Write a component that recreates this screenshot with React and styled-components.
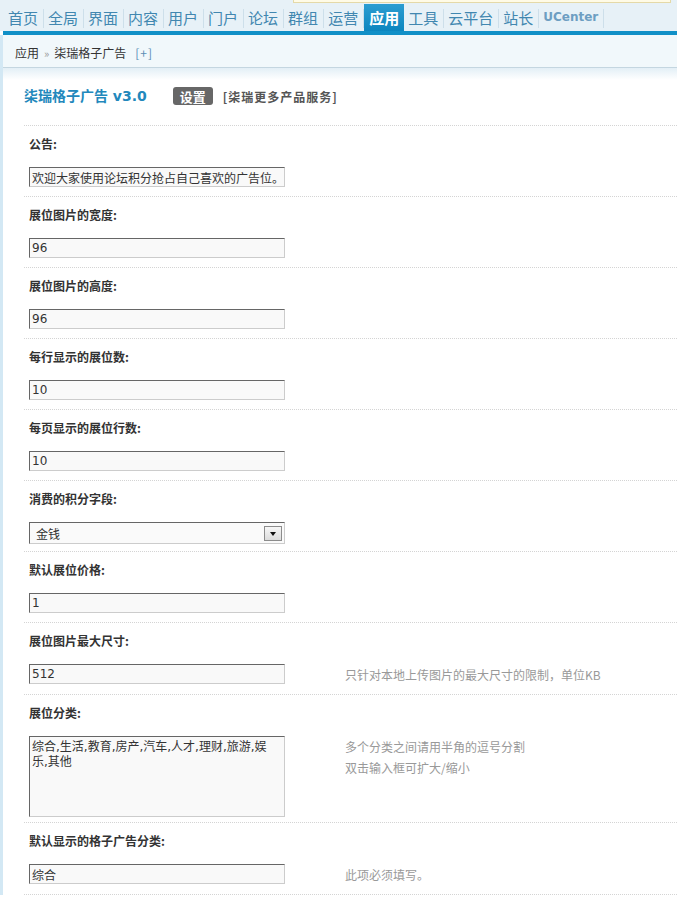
import React from 'react';
import styled, { createGlobalStyle } from 'styled-components';

const Global = createGlobalStyle`
  html, body { margin: 0; padding: 0; background: #fff; }
  body {
    font-family: "Noto Sans CJK SC", "Liberation Sans", sans-serif;
    font-size: 12px;
    color: #333;
  }
`;

const Page = styled.div`
  position: relative;
  width: 677px;
  min-height: 898px;
  overflow: hidden;
`;

const Notice = styled.div`
  position: absolute;
  top: 0;
  left: 293px;
  width: 376px;
  height: 2px;
  background: #fffbe6;
  border: 1px solid #e4d9a8;
  border-top: none;
`;

const Nav = styled.ul`
  display: flex;
  margin: 0;
  padding: 4px 0 0 4px;
  height: 27px;
  list-style: none;
  background: #e7f1f7;
`;

const NavItem = styled.li`
  display: flex;
  align-items: center;
  height: 27px;
  padding: ${p => (p.$active ? '0 5px' : '0 0 0 4px')};
  font-size: 15px;
  line-height: 27px;
  color: ${p => (p.$active ? '#fff' : '#4187b0')};
  font-weight: ${p => (p.$active ? 'bold' : 'normal')};
  background: ${p => (p.$active ? 'linear-gradient(#2c9dd1, #0c86bf)' : 'transparent')};
  white-space: nowrap;

  &::after {
    content: '';
    display: ${p => (p.$active ? 'none' : 'block')};
    width: 1px;
    height: 19px;
    margin-left: 5px;
    margin-top: 2px;
    background: #cddfea;
  }
`;

const NavLatin = styled.span`
  font-family: "DejaVu Sans", "Liberation Sans", sans-serif;
  font-size: 12px;
  font-weight: bold;
  color: #6d9ec2;
`;

const Bar = styled.div`
  height: 4px;
  margin-left: 3px;
  background: #1190c7;
`;

const Main = styled.div`
  border-left: 3px solid #d3e8f4;
`;

const Crumbs = styled.div`
  display: flex;
  align-items: center;
  gap: 5px;
  height: 29px;
  padding: 3px 0 0 12px;
  background: #f1f8fb;
  border-bottom: 1px solid #c4d6e0;
  color: #333;
`;

const CrumbSep = styled.span`
  color: #999;
  font-size: 11px;
`;

const CrumbAdd = styled.span`
  color: #5a8db4;
  margin-left: 4px;
  letter-spacing: 1px;
`;

const Content = styled.div`
  padding-left: 21px;
  background: linear-gradient(to bottom, #e3eff6 0, #ffffff 12px) no-repeat;
`;

const TitleRow = styled.div`
  display: flex;
  align-items: center;
  height: 18px;
  padding: 19px 0 20px 0;
`;

const Title = styled.h3`
  margin: 0;
  font-family: "DejaVu Sans", "Noto Sans CJK SC", sans-serif;
  font-size: 14px;
  font-weight: bold;
  line-height: 18px;
  color: #2288bc;
`;

const Badge = styled.span`
  display: inline-flex;
  align-items: center;
  height: 18px;
  margin-left: 26px;
  padding: 0 7px;
  border-radius: 3px;
  background: #676767;
  color: #fff;
  font-size: 13px;
  font-weight: bold;
`;

const MoreLink = styled.span`
  margin-left: 10px;
  font-size: 12px;
  font-weight: bold;
  letter-spacing: 1px;
  color: #555;
`;

const Field = styled.div`
  border-top: 1px dotted #d4d4d4;
`;

const Label = styled.div`
  padding: 9px 0 0 5px;
  line-height: 18px;
  font-weight: bold;
  color: #333;
`;

const ControlRow = styled.div`
  display: grid;
  grid-template-columns: 316px 1fr;
  align-items: start;
  padding: 14px 0 ${p => p.$pb ?? 9}px 5px;
`;

const fieldBox = `
  display: block;
  box-sizing: border-box;
  width: 256px;
  margin: 0;
  border: 1px solid;
  border-color: #666 #ccc #ccc #666;
  background: #f9f9f9;
  color: #333;
  font-family: "DejaVu Sans", "Noto Sans CJK SC", sans-serif;
  font-size: 12px;
  outline: none;
`;

const TextInput = styled.input`
  ${fieldBox}
  height: 20px;
  padding: 0 2px;
  line-height: 18px;
`;

const TextArea = styled.textarea`
  ${fieldBox}
  height: 81px;
  padding: 3px 12px 2px 2px;
  line-height: 15px;
  resize: none;
  overflow: hidden;
`;

const SelectWrap = styled.div`
  position: relative;
  width: 256px;
  height: 22px;
`;

const Select = styled.select`
  ${fieldBox}
  height: 22px;
  padding: 0 0 0 6px;
  appearance: none;
  -webkit-appearance: none;
  background: #fafafa;
  font-family: "Noto Sans CJK SC", sans-serif;
`;

const Arrow = styled.span`
  position: absolute;
  top: 4px;
  right: 3px;
  box-sizing: border-box;
  width: 18px;
  height: 15px;
  border: 1px solid #8c8c8c;
  background: linear-gradient(#f7f7f7, #dcdcdc);
  display: flex;
  align-items: center;
  justify-content: center;
  pointer-events: none;

  &::before {
    content: '';
    width: 0;
    height: 0;
    border-left: 3px solid transparent;
    border-right: 3px solid transparent;
    border-top: 4px solid #111;
  }
`;

const Hint = styled.div`
  color: #999;
  line-height: 21px;
  padding-top: 0;
`;

const fields = [
  { label: '公告:', value: '欢迎大家使用论坛积分抢占自己喜欢的广告位。' },
  { label: '展位图片的宽度:', value: '96' },
  { label: '展位图片的高度:', value: '96' },
  { label: '每行显示的展位数:', value: '10' },
  { label: '每页显示的展位行数:', value: '10' },
  { label: '消费的积分字段:', type: 'select', value: '金钱' },
  { label: '默认展位价格:', value: '1' },
  { label: '展位图片最大尺寸:', value: '512', hints: ['只针对本地上传图片的最大尺寸的限制，单位KB'] },
  {
    label: '展位分类:',
    type: 'textarea',
    value: '综合,生活,教育,房产,汽车,人才,理财,旅游,娱乐,其他',
    hints: ['多个分类之间请用半角的逗号分割', '双击输入框可扩大/缩小'],
  },
  { label: '默认显示的格子广告分类:', value: '综合', hints: ['此项必须填写。'] },
];

const navItems = ['首页', '全局', '界面', '内容', '用户', '门户', '论坛', '群组', '运营', '应用', '工具', '云平台', '站长'];

function Control({ f }) {
  if (f.type === 'select') {
    return (
      <SelectWrap>
        <Select defaultValue={f.value}>
          <option>{f.value}</option>
        </Select>
        <Arrow />
      </SelectWrap>
    );
  }
  if (f.type === 'textarea') {
    return <TextArea defaultValue={f.value} />;
  }
  return <TextInput defaultValue={f.value} />;
}

export default function App() {
  return (
    <Page>
      <Global />
      <Nav>
        {navItems.map(n => (
          <NavItem key={n} $active={n === '应用'}>{n}</NavItem>
        ))}
        <NavItem><NavLatin>UCenter</NavLatin></NavItem>
      </Nav>
      <Notice />
      <Bar />
      <Main>
        <Crumbs>
          <span>应用</span>
          <CrumbSep>»</CrumbSep>
          <span>柒瑞格子广告</span>
          <CrumbAdd>[+]</CrumbAdd>
        </Crumbs>
        <Content>
          <TitleRow>
            <Title>柒瑞格子广告 v3.0</Title>
            <Badge>设置</Badge>
            <MoreLink>[柒瑞更多产品服务]</MoreLink>
          </TitleRow>
          {fields.map(f => (
            <Field key={f.label}>
              <Label>{f.label}</Label>
              <ControlRow $pb={f.type === 'select' ? 7 : f.type === 'textarea' ? 5 : 9}>
                <Control f={f} />
                <Hint>
                  {(f.hints || []).map(h => (
                    <div key={h}>{h}</div>
                  ))}
                </Hint>
              </ControlRow>
            </Field>
          ))}
          <Field />
        </Content>
      </Main>
    </Page>
  );
}
